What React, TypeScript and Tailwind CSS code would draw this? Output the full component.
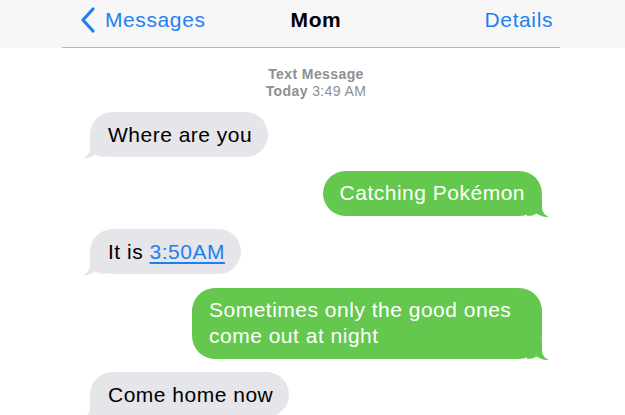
import React from "react";

function Tail({ side, color }: { side: "left" | "right"; color: string }) {
  return (
    <svg
      width="22"
      height="20"
      viewBox="0 0 22 20"
      className={
        side === "left"
          ? "absolute left-[-7px] bottom-[-1px]"
          : "absolute right-[-7px] bottom-[-1px] -scale-x-100"
      }
    >
      <path
        d="M7 0 L7 10 C7 15 4 18.5 0 20 C5 20.2 9 18.8 12.5 16.5 C15 18.2 17.5 19 22 19 L22 0 Z"
        fill={color}
      />
    </svg>
  );
}

function Incoming({ children }: { children: React.ReactNode }) {
  return (
    <div className="self-start relative">
      <Tail side="left" color="#e5e5ea" />
      <div className="relative bg-[#e5e5ea] text-black rounded-[23px] pl-[18px] pr-[16px] py-[9.5px]">
        {children}
      </div>
    </div>
  );
}

function Outgoing({ children, wide }: { children: React.ReactNode; wide?: boolean }) {
  return (
    <div className={"self-end relative " + (wide ? "w-[350px]" : "")}>
      <Tail side="right" color="#65c84e" />
      <div className="relative bg-[#65c84e] text-white rounded-[23px] pl-[17px] pr-[17px] py-[9.5px]">
        {children}
      </div>
    </div>
  );
}

export default function App() {
  return (
    <div className="w-[625px] h-[415px] bg-white overflow-hidden font-['Liberation_Sans',Arial,sans-serif]">
      <div className="h-[48px] bg-[#f7f7f7]">
        <div className="ml-[62px] w-[498px] h-[48px] border-b border-[#b6b6b6] grid grid-cols-[1fr_auto_1fr] items-center pb-[8px] tracking-[0.6px]">
          <div className="flex items-center pl-[18px] text-[#1f80f4] text-[21px]">
            <svg width="16" height="26" viewBox="0 0 16 26" className="mt-[1px]">
              <path
                d="M13 2 L3 13 L13 24"
                fill="none"
                stroke="#1f80f4"
                strokeWidth="3.2"
                strokeLinecap="round"
                strokeLinejoin="round"
              />
            </svg>
            <span className="ml-[9px]">Messages</span>
          </div>
          <div className="pl-[10px] text-[21px] font-bold text-black">Mom</div>
          <div className="text-right pr-[7px] text-[21px] text-[#1f80f4]">Details</div>
        </div>
      </div>

      <div className="pl-[90px] pr-[83px]">
        <div className="mt-[18px] text-center text-[14px] leading-[17px] tracking-[0.4px] text-[#8e8e93]">
          <div className="font-bold">Text Message</div>
          <div>
            <span className="font-bold">Today</span> 3:49 AM
          </div>
        </div>

        <div className="mt-[12px] flex flex-col gap-[13.5px] text-[21px] leading-[26px] tracking-[0.5px]">
          <Incoming>Where are you</Incoming>
          <Outgoing>Catching Pokémon</Outgoing>
          <Incoming>
            It is <span className="text-[#1f7ef0] underline underline-offset-[3px]">3:50AM</span>
          </Incoming>
          <Outgoing wide>Sometimes only the good ones come out at night</Outgoing>
          <Incoming>Come home now</Incoming>
        </div>
      </div>
    </div>
  );
}
